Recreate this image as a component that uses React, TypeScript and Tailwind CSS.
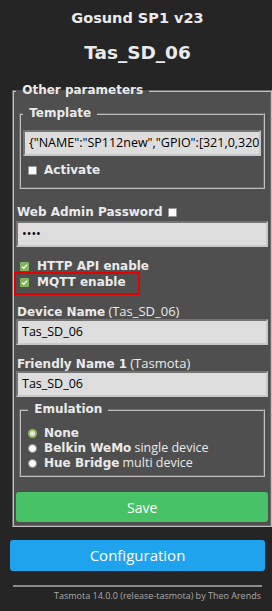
import type { ReactNode } from 'react';

const bold = "font-['DejaVu_Sans',sans-serif] font-bold";
const soft = "font-['Open_Sans',sans-serif]";

function Check({ on }: { on: boolean }) {
  return on ? (
    <span className="inline-flex h-[9px] w-[9px] shrink-0 items-center justify-center rounded-[1px] bg-[#80b45a]">
      <svg width="7" height="7" viewBox="0 0 7 7">
        <path d="M1 3.6 L2.8 5.3 L6 1.6" stroke="#fff" strokeWidth="1.3" fill="none" />
      </svg>
    </span>
  ) : (
    <span className="inline-block h-[9px] w-[9px] shrink-0 rounded-[1px] border border-[#9a9a9a] bg-white" />
  );
}

function Radio({ on }: { on: boolean }) {
  return on ? (
    <span className="inline-block h-[9px] w-[9px] shrink-0 rounded-full border-[2px] border-[#8fbf5a] bg-[#e8e8e8]" />
  ) : (
    <span className="inline-block h-[9px] w-[9px] shrink-0 rounded-full border border-[#8a8a8a] bg-white" />
  );
}

function Field({ value }: { value: string }) {
  return (
    <div
      className={`flex h-[26px] items-center overflow-hidden whitespace-nowrap border-2 border-[#c8c8c8] [border-style:inset] bg-[#dddddd] pl-[4px] text-[12.5px] text-black ${soft}`}
    >
      {value}
    </div>
  );
}

function Legend({ children }: { children: ReactNode }) {
  return (
    <legend className={`px-[2px] text-[12px] leading-[15px] ${bold}`}>
      &nbsp;{children}&nbsp;
    </legend>
  );
}

export default function App() {
  return (
    <div className="min-h-[611px] bg-[#252525] text-[#eaeaea]">
      <div className="pl-[10px] pr-[7px]">
        <div className={`pt-[10px] text-center text-[14.5px] leading-[16px] ${bold}`}>Gosund SP1 v23</div>
        <div className={`mt-[16px] text-center text-[18.5px] leading-[22px] ${bold}`}>Tas_SD_06</div>

        <fieldset className="mx-[2px] mt-[19px] border-2 border-[#c0c0c0] [border-style:groove] bg-[#4f4f4f] px-[2px] pb-[3px] pt-[8px]">
          <Legend>Other parameters</Legend>

          <fieldset className="mx-[3px] border-2 border-[#c0c0c0] [border-style:groove] px-[2px] pb-[9px] pt-[9px]">
            <Legend>Template</Legend>
            <Field value={'{"NAME":"SP112new","GPIO":[321,0,320'} />
            <div className={`mt-[6px] flex items-center gap-[7px] pl-[5px] text-[12px] leading-[16px] ${bold}`}>
              <Check on={false} />
              Activate
            </div>
          </fieldset>

          <div className={`mt-[15px] flex items-center gap-[5px] pl-[1px] text-[12px] leading-[16px] ${bold}`}>
            Web Admin Password
            <Check on={false} />
          </div>
          <div className="mt-[1px]">
            <Field value="••••" />
          </div>

          <div className="mt-[11px] flex flex-col">
            <div className={`flex h-[16px] items-center gap-[8px] pl-[4px] text-[12px] ${bold}`}>
              <Check on />
              HTTP API enable
            </div>
            <div className="relative">
              <div className={`flex h-[16px] items-center gap-[8px] pl-[4px] text-[12px] ${bold}`}>
                <Check on />
                MQTT enable
              </div>
              <span className="pointer-events-none absolute left-[-2px] top-[-2px] h-[23px] w-[126px] border-2 border-[#e60000]" />
            </div>
          </div>

          <div className="mt-[14px] pl-[1px] text-[12px] leading-[14px]">
            <span className={bold}>Device Name</span> <span className={`${soft} text-[13px]`}>(Tas_SD_06)</span>
          </div>
          <Field value="Tas_SD_06" />

          <div className="mt-[11px] pl-[1px] text-[12px] leading-[14px]">
            <span className={bold}>Friendly Name 1</span> <span className={`${soft} text-[13px]`}>(Tasmota)</span>
          </div>
          <Field value="Tas_SD_06" />

          <fieldset className="mx-[3px] mt-[5px] border-2 border-[#c0c0c0] [border-style:groove] px-[7px] pb-[5px] pt-[9px]">
            <Legend>Emulation</Legend>
            <div className="flex flex-col gap-[1px] text-[12px] leading-[14px]">
              <div className="flex h-[14px] items-center gap-[7px]">
                <Radio on />
                <span className={bold}>None</span>
              </div>
              <div className="flex h-[14px] items-center gap-[7px]">
                <Radio on={false} />
                <span>
                  <span className={bold}>Belkin WeMo</span> <span className={`${soft} text-[12.5px]`}>single device</span>
                </span>
              </div>
              <div className="flex h-[14px] items-center gap-[7px]">
                <Radio on={false} />
                <span>
                  <span className={bold}>Hue Bridge</span> <span className={`${soft} text-[12.5px]`}>multi device</span>
                </span>
              </div>
            </div>
          </fieldset>

          <button
            type="button"
            className={`mt-[15px] flex h-[30px] w-full items-center justify-center rounded-[3px] bg-[#47c266] text-[14px] text-white ${soft}`}
          >
            Save
          </button>
        </fieldset>

        <button
          type="button"
          className={`mt-[13px] flex h-[31px] w-full items-center justify-center rounded-[3px] bg-[#1fa3ec] text-[15px] text-white ${soft}`}
        >
          Configuration
        </button>

        <div className="mx-[3px] mt-[14px] h-[2px] bg-[#8a8a8a]" />
        <div className={`mt-[3px] pr-[4px] text-right text-[9px] leading-[12px] text-[#aaaaaa] ${soft}`}>
          Tasmota 14.0.0 (release-tasmota) by Theo Arends
        </div>
      </div>
    </div>
  );
}
